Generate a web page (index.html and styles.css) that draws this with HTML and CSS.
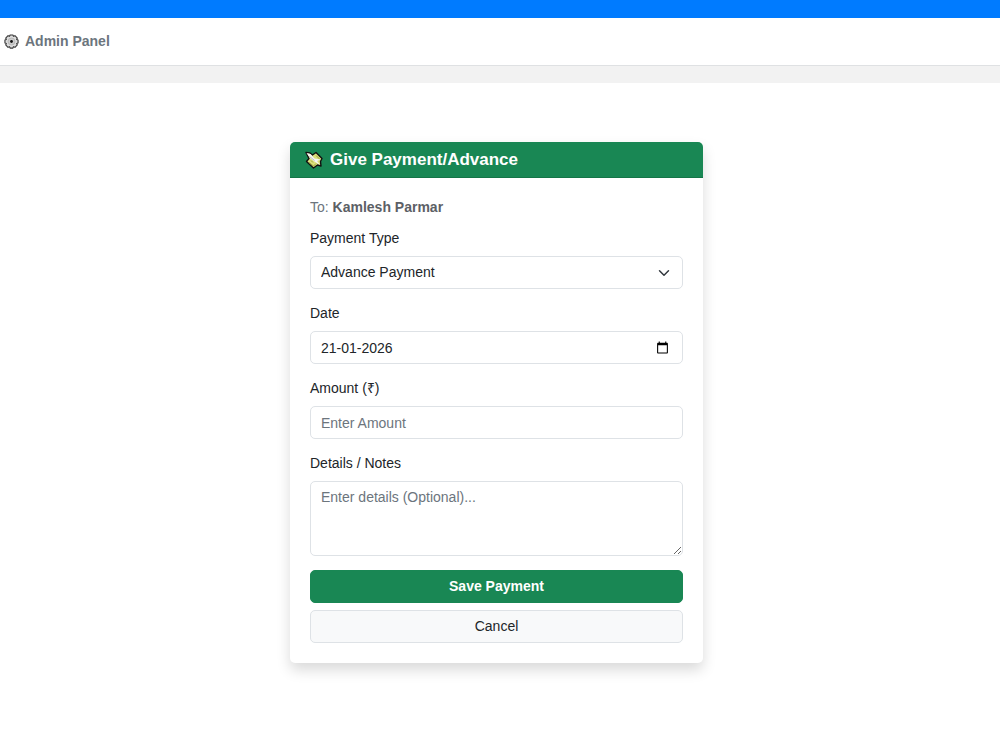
FILE: index.html
```html
<!DOCTYPE html>
<html lang="en">
<head>
    <meta charset="UTF-8">
    <meta name="viewport" content="width=device-width, initial-scale=1.0">
    <title>Give Payment/Advance</title>
    <link rel="stylesheet" href="styles.css">
</head>
<body>
    <div class="top-bar"></div>
    <header class="navbar">
        <svg class="gear" viewBox="0 0 16 16" aria-hidden="true">
            <path d="M6.5 1h3l.6 1.5 1.6-.7 2.5 2.5-.7 1.6 1.5.6v3l-1.5.6.7 1.6-2.5 2.5-1.6-.7-.6 1.5h-3l-.6-1.5-1.6.7-2.5-2.5.7-1.6L1 9.5v-3l1.5-.6-.7-1.6 2.5-2.5 1.6.7Z" fill="#ddd" stroke="#3a3a3a" stroke-width="1.2" stroke-linejoin="round"/>
            <circle cx="8" cy="8" r="3.7" fill="#ccc" stroke="#b5b5b5" stroke-width="1"/>
            <circle cx="8" cy="8" r="1.5" fill="#111"/>
        </svg>
        <span>Admin Panel</span>
    </header>
    <div class="strip"></div>

    <main class="page">
        <div class="card">
            <div class="card-header">
                <svg class="money" viewBox="0 0 18 18" aria-hidden="true">
                    <path d="M1 1.5 5 2l2.500 2L11 1.500l6 6-1.500 3L16 15l-3.500-1L8.500 17 1.500 10.500 4 7.500Z" fill="#dde07c" stroke="#111" stroke-width="1.4" stroke-linejoin="round"/>
                    <path d="M4 11.500 8.500 15 11 12.500M11 4.500l3.500 3.500M6 9.500l2 2" fill="none" stroke="#9aa43c" stroke-width="1"/>
                    <path d="M1.500 2 5.500 3 9.500 7.500 15.500 8.500 12 10 15 14 9.500 10.500 5 7Z" fill="#f6f6f6"/>
                    <path d="M4.500 5.500 9.500 9.500" stroke="#999" stroke-width="0.6"/>
                </svg>
                <h1>Give Payment/Advance</h1>
            </div>
            <form class="card-body">
                <p class="recipient">To: <strong>Kamlesh Parmar</strong></p>

                <div class="field">
                    <label for="type">Payment Type</label>
                    <select id="type" class="control select">
                        <option>Advance Payment</option>
                    </select>
                </div>

                <div class="field">
                    <label for="date">Date</label>
                    <input type="text" id="date" class="control date" value="21-01-2026">
                </div>

                <div class="field">
                    <label for="amount">Amount (₹)</label>
                    <input type="number" id="amount" class="control" placeholder="Enter Amount">
                </div>

                <div class="field">
                    <label for="notes">Details / Notes</label>
                    <textarea id="notes" class="control notes" placeholder="Enter details (Optional)..."></textarea>
                </div>

                <div class="actions">
                    <button type="submit" class="btn btn-save">Save Payment</button>
                    <button type="button" class="btn btn-cancel">Cancel</button>
                </div>
            </form>
        </div>
    </main>
</body>
</html>
```

FILE: styles.css
```css
* {
    box-sizing: border-box;
}
body {
    margin: 0;
    font-family: "Liberation Sans", Arial, sans-serif;
    font-size: 14px;
    line-height: 21px;
    color: #212529;
    background: #fff;
}
.top-bar {
    height: 18px;
    background: #007bff;
}
.navbar {
    display: flex;
    align-items: center;
    gap: 6px;
    height: 47px;
    padding: 0 4px;
    font-weight: bold;
    color: #6c757d;
}
.gear {
    width: 15px;
    height: 15px;
}
.strip {
    height: 18px;
    background: #f2f2f2;
    border-top: 1px solid #dfe1e3;
}
.page {
    padding: 59px 7px 59px 0;
}
.card {
    max-width: 413px;
    margin: 0 auto;
    background: #fff;
    border-radius: 5px;
    box-shadow: 0 7px 14px rgba(0, 0, 0, 0.15);
}
.card-header {
    display: flex;
    align-items: center;
    gap: 7px;
    height: 36px;
    padding: 0 15px;
    background: #198754;
    border-bottom: 1px solid #147547;
    border-radius: 5px 5px 0 0;
    color: #fff;
}
.money {
    width: 18px;
    height: 18px;
}
h1 {
    margin: 0;
    font-size: 17px;
}
.card-body {
    display: flex;
    flex-direction: column;
    gap: 14px;
    padding: 19px 20px 20px;
}
.recipient {
    margin: 0 0 -4px;
    color: #6c757d;
}
.recipient strong {
    color: #5c6065;
}
.field {
    display: flex;
    flex-direction: column;
    gap: 7px;
}
.control {
    width: 100%;
    height: 33px;
    padding: 5px 10px;
    border: 1px solid #dee2e6;
    border-radius: 5px;
    background-color: #fff;
    color: #212529;
    font: inherit;
}
.control::placeholder {
    color: #6c757d;
}
.select {
    appearance: none;
    background-image: url("data:image/svg+xml,%3Csvg xmlns='http://www.w3.org/2000/svg' viewBox='0 0 16 16'%3E%3Cpath fill='none' stroke='%23343a40' stroke-linecap='round' stroke-linejoin='round' stroke-width='2' d='m2 5 6 6 6-6'/%3E%3C/svg%3E");
    background-repeat: no-repeat;
    background-position: right 12px center;
    background-size: 12px 12px;
}
.date {
    background-image: url("data:image/svg+xml,%3Csvg xmlns='http://www.w3.org/2000/svg' viewBox='0 0 24 24'%3E%3Cpath d='M20 3h-1V1h-2v2H7V1H5v2H4c-1.1 0-2 .9-2 2v16c0 1.1.9 2 2 2h16c1.1 0 2-.9 2-2V5c0-1.1-.9-2-2-2zm0 18H4V8h16v13z'/%3E%3C/svg%3E");
    background-repeat: no-repeat;
    background-position: right 13px center;
    background-size: 13px 13px;
}
.notes {
    height: 75px;
    resize: vertical;
}
.actions {
    display: flex;
    flex-direction: column;
    gap: 7px;
}
.btn {
    height: 33px;
    border: 1px solid;
    border-radius: 5px;
    font: inherit;
}
.btn-save {
    background: #198754;
    border-color: #198754;
    color: #fff;
    font-weight: bold;
}
.btn-cancel {
    background: #f8f9fa;
    border-color: #dee2e6;
    color: #212529;
}
```
